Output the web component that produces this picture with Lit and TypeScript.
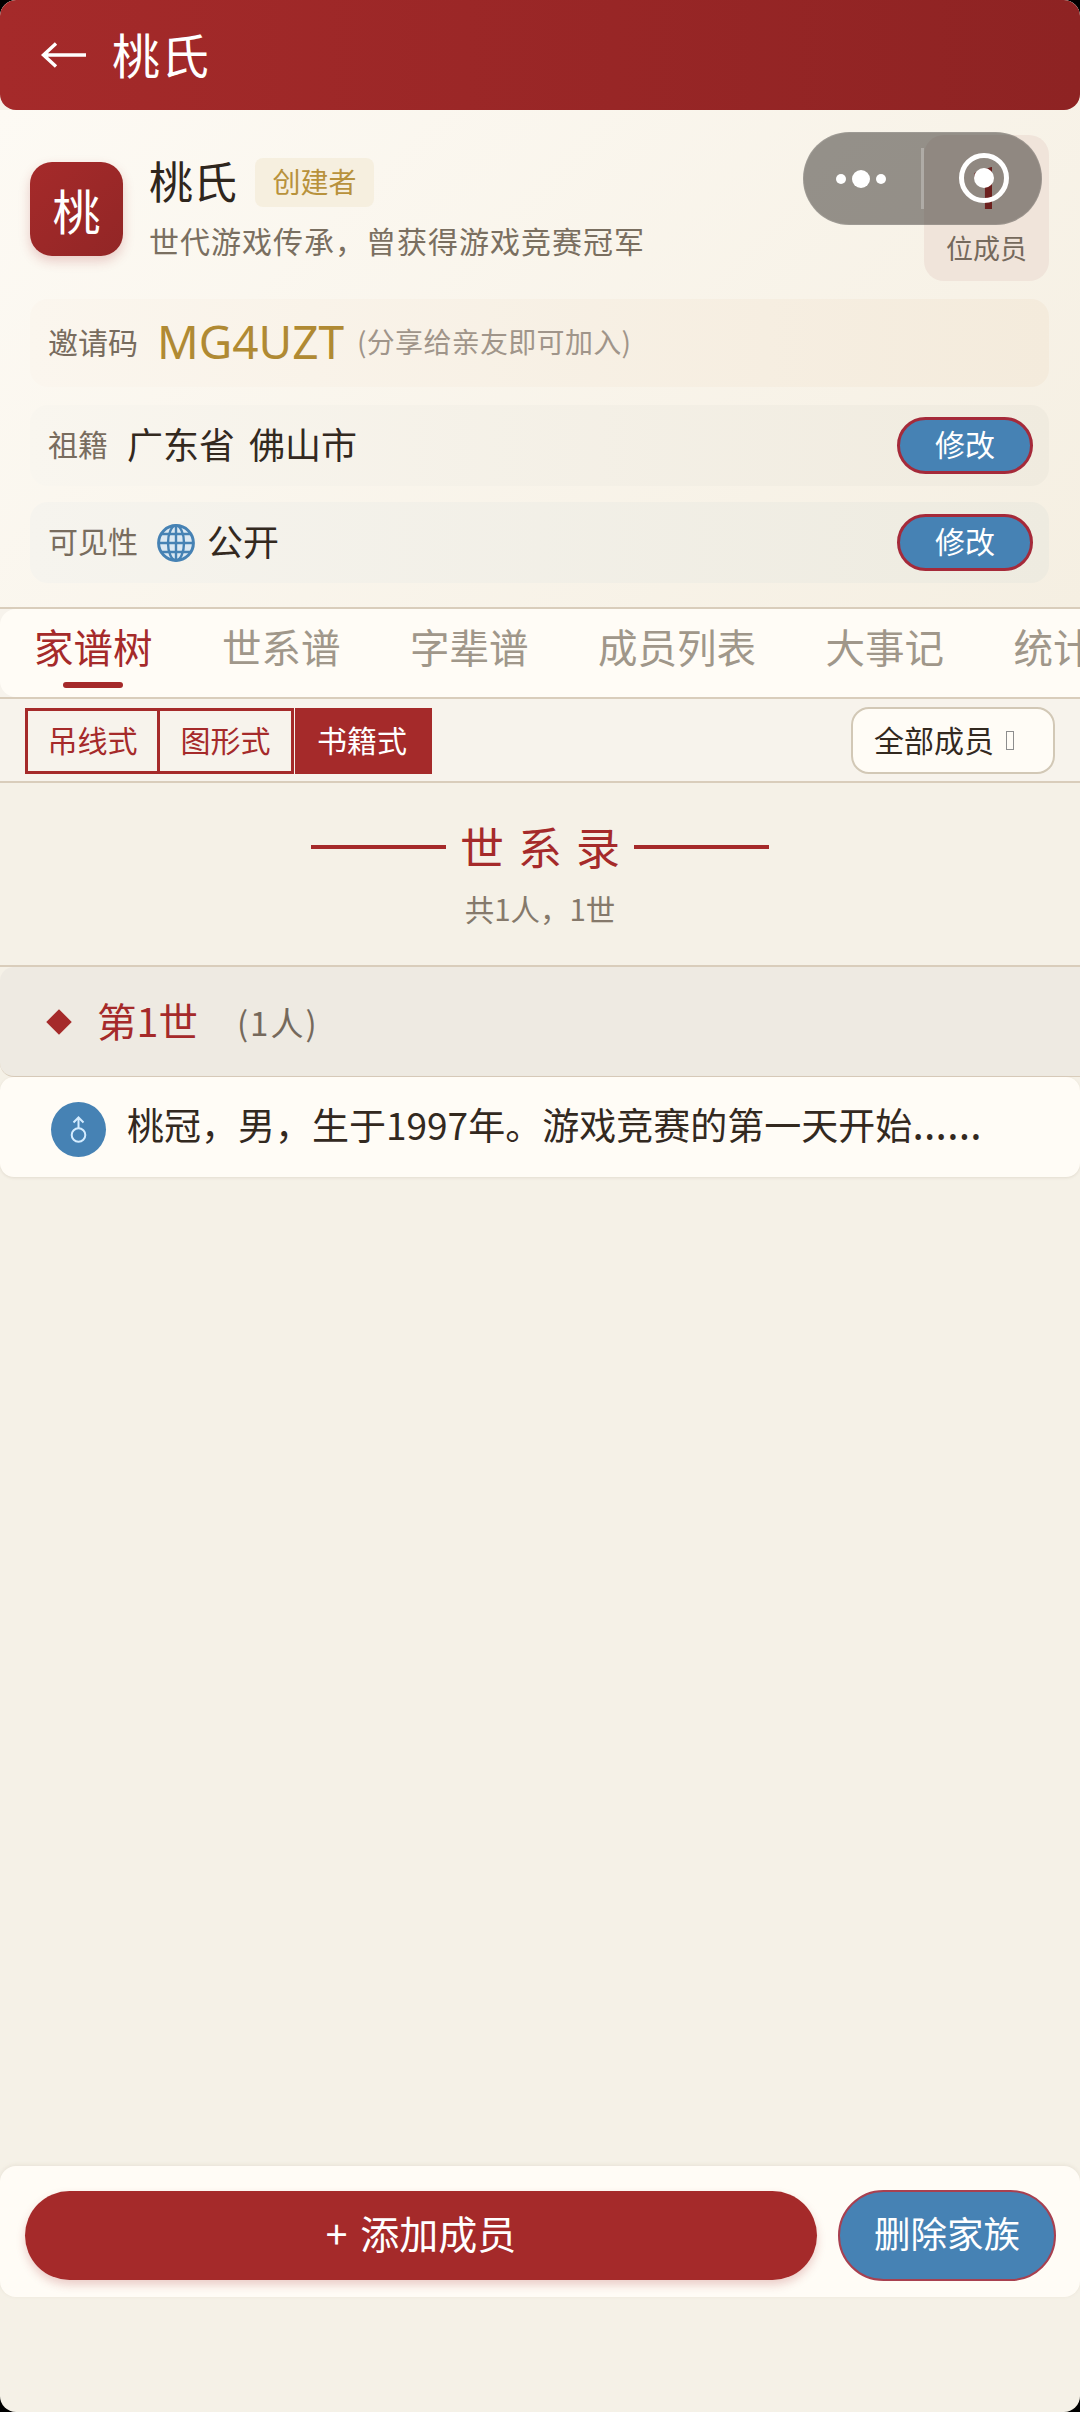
import { LitElement, html, css, svg } from "lit";
import { customElement } from "lit/decorators.js";

const globe = svg`<svg class="globe" viewBox="0 0 38 38" width="38" height="38" fill="none" stroke="#4682b4" stroke-width="2.4">
  <circle cx="19" cy="19" r="17.4" fill="#dbe8f2" stroke-width="3"/>
  <ellipse cx="19" cy="19" rx="8" ry="17.4"/>
  <line x1="19" y1="2" x2="19" y2="36"/>
  <line x1="2" y1="19" x2="36" y2="19"/>
  <path d="M4.5 10H33.5M4.5 28H33.5"/>
</svg>`;

const male = svg`<svg viewBox="0 0 55 55" width="55" height="55" fill="none" stroke="#d4ecff" stroke-width="2">
  <circle cx="27.5" cy="33" r="6.8"/>
  <path d="M27.5 26.2V16M22.5 20.5L27.5 15.5L32.5 20.5"/>
</svg>`;

const arrow = svg`<svg viewBox="0 0 48 32" width="48" height="32" fill="none" stroke="#fff" stroke-width="3.4">
  <path d="M46 16H3M16 4.5L3.5 16L16 27.5"/>
</svg>`;

@customElement("app-root")
export class AppRoot extends LitElement {
  static styles = css`
    :host { display: block; width: 1080px; height: 2412px; background: #000;
      font-family: "Noto Sans CJK SC", "Noto Sans", sans-serif; color: #33291f; }
    * { box-sizing: border-box; }
    .page { position: relative; height: 100%; display: flex; flex-direction: column; background: #f5f1e7;
      border-radius: 16px; overflow: hidden; padding-bottom: 115px; }
    .header { height: 110px; flex: none; display: flex; align-items: center; gap: 24px; padding-left: 40px;
      background: linear-gradient(90deg, #a52a2a, #8e2323); border-radius: 16px; color: #fff;
      font-size: 48px; line-height: 60px; letter-spacing: 1px; }
    .header span { margin-bottom: 5px; }
    .header svg { display: block; margin-top: 0; }
    .card { flex: none; height: 497px; padding: 25px 31px 0 30px; display: flex; flex-direction: column;
      background: linear-gradient(135deg, #fdfaf4, #f5efe2); }
    .head { display: flex; align-items: flex-start; height: 146px; }
    .logo { width: 93px; height: 94px; margin-top: 27px; border-radius: 22px; display: flex; align-items: center; justify-content: center;
      background: linear-gradient(135deg, #a52a2a, #922626); color: #fff; font-size: 48px; line-height: 60px;
      box-shadow: 0 5px 12px rgba(165,42,42,.22); flex: none; }
    .info { margin: 23px 0 0 26px; }
    .name-line { display: flex; align-items: center; gap: 18px; height: 49px; }
    .name { font-size: 44px; line-height: 50px; color: #2f261d; margin-bottom: 5px; }
    .badge { width: 119px; height: 49px; border-radius: 8px; background: #f6efdf; color: #b8923c;
      font-size: 28px; line-height: 47px; text-align: center; }
    .sub { margin-top: 13px; font-size: 30px; line-height: 40px; letter-spacing: 1px; color: #7a6f60; white-space: nowrap; }
    .members { margin-left: auto; width: 125px; height: 146px; padding-top: 14px; border-radius: 20px; background: #f0e4da;
      display: flex; flex-direction: column; align-items: center; flex: none; }
    .num { font-family: Roboto, sans-serif; font-size: 60px; line-height: 80px; height: 80px; color: #a81515; font-weight: 500; }
    .mlabel { margin-top: 1px; font-size: 27px; line-height: 36px; color: #75695c; }
    .row { border-radius: 18px; display: flex; align-items: center; padding: 0 16px 0 18px; }
    .invite { margin-top: 18px; height: 88px; background: linear-gradient(90deg, #fbf6ee, #f4ebdc); }
    .gray { height: 81px; margin-top: 18px; background: linear-gradient(90deg, #f9f6ef, #f0ebdf); }
    .gray + .gray { margin-top: 16px; background: linear-gradient(90deg, #f6f4ee, #eeebe0); }
    .label { font-size: 30px; line-height: 40px; color: #786c5e; margin-bottom: 5px; }
    .gray .label { margin-bottom: 6px; }
    .code { margin-left: 19px; font-size: 46px; line-height: 60px; color: #b08a33; font-family: "Noto Sans", sans-serif; margin-bottom: 5px; }
    .hint { margin-left: 13px; font-size: 28px; line-height: 40px; letter-spacing: .3px; color: #a0958a; margin-bottom: 5px; }
    .val { margin-left: 19px; font-size: 36px; line-height: 46px; color: #33291f; word-spacing: 6px; margin-bottom: 6px; }
    .globe { margin-left: 19px; margin-bottom: 0; flex: none; display: block; }
    .val.pub { margin-left: 12px; }
    .edit { margin-left: auto; width: 136px; height: 57px; border-radius: 29px; background: #4682b4; border: 3px solid #a52a3a;
      color: #fff; font-size: 30px; line-height: 46px; text-align: center; flex: none; }
    .tabs { flex: none; border-top: 2px solid #d9cdbb; border-bottom: 2px solid #d9cdbb; height: 92px; background: #f7f3ec; }
    .tabbar { height: 88px; padding: 12px 0 0 34px; display: flex; gap: 69.5px; overflow: hidden; background: #fffcf6; border-radius: 16px 0 0 16px; }
    .tab { flex: none; display: flex; flex-direction: column; align-items: center; font-size: 39.5px; line-height: 50px; color: #a0978a; }
    .tab.on { color: #a52a2a; }
    .tab i { display: block; width: 60px; height: 6px; margin-top: 11px; border-radius: 3px; background: #a52a2a; }
    .subbar { flex: none; height: 84px; padding: 9px 25px 0 25px; display: flex; align-items: flex-start; background: #f7f3ec; border-bottom: 2px solid #d9cdbb; }
    .seg { width: 135px; height: 66px; border: 3px solid #a52a2a; color: #a52a2a; font-size: 30px; line-height: 57px; text-align: center; }
    .seg + .seg { width: 134px; border-left: none; }
    .seg + .seg.on { width: 137px; margin-left: 1px; background: #a52a2a; color: #fff; }
    .select { margin-left: auto; margin-top: -1px; width: 204px; height: 67px; border: 2.5px solid #d2c8b6; border-radius: 18px; background: #fffcf6;
      display: flex; align-items: center; padding-left: 21px; font-size: 30px; color: #33291f; }
    .select span { margin-bottom: 3px; }
    .tofu { width: 8px; height: 19px; margin-left: 12px; border: 1px solid #8d8d8d; }
    .title { flex: none; height: 184px; display: flex; flex-direction: column; align-items: center; padding-top: 40px; border-bottom: 2px solid #d9cdbb; }
    .t-line { display: flex; align-items: center; gap: 14px; color: #a52a2a; font-size: 44px; line-height: 50px; letter-spacing: 14px; height: 50px; }
    .t-line span { margin-right: -14px; margin-bottom: 5px; }
    .t-line i { display: block; width: 135px; height: 4px; background: #a52a2a; margin-bottom: 3px; }
    .t-sub { margin-top: 15px; font-size: 29.5px; line-height: 40px; color: #85796b; }
    .sec { flex: none; height: 110px; display: flex; align-items: center; padding-left: 50px; background: #eeeae2; border-radius: 14px 0 0 14px; border-bottom: 1.5px solid #d9cdbb; }
    .diamond { width: 18px; height: 18px; background: #a52a2a; transform: rotate(45deg); flex: none; }
    .gen { margin-left: 29px; font-size: 39.5px; line-height: 50px; color: #a52a2a; margin-bottom: 3px; }
    .cnt { margin-left: 39px; font-size: 33px; line-height: 44px; color: #75695c; letter-spacing: 2px; }
    .item { flex: none; height: 100px; display: flex; align-items: center; padding: 0 0 0 51px; background: #fffcf6; border-radius: 14px; box-shadow: 0 1px 3px rgba(120,100,70,.14); }
    .avatar { width: 55px; height: 55px; margin-top: 4px; border-radius: 50%; background: #4682b4; flex: none; }
    .avatar svg { display: block; }
    .itxt { margin-left: 21px; margin-top: -7px; font-size: 37px; line-height: 50px; color: #33291f; white-space: nowrap; }
    .dots { font-family: "Noto Sans", sans-serif; font-size: 44px; line-height: 1; }
    .grow { flex: 1; }
    .bar { flex: none; height: 131px; display: flex; align-items: flex-start; padding: 25px 24px 0 25px; gap: 21px; background: #fffcf6; border-radius: 16px; box-shadow: 0 -1px 4px rgba(120,100,70,.1); }
    .add { width: 792px; height: 89px; border-radius: 45px; background: #a52a2a; color: #fff; font-size: 39px; line-height: 83px; text-align: center;
      box-shadow: 0 5px 10px rgba(165,42,42,.22); word-spacing: 4px; }
    .del { width: 218px; height: 91px; margin-top: -1px; border-radius: 46px; background: #4682b4; border: 2.5px solid #a84050; color: #fff; font-size: 36.5px; line-height: 82px; text-align: center; }
    .capsule { position: absolute; left: 803px; top: 132px; width: 239px; height: 93px; border-radius: 47px; background: rgba(47,43,40,.5); box-shadow: inset 0 0 0 1px rgba(255,255,255,.1); }
    .dot { position: absolute; top: 42px; width: 10px; height: 10px; border-radius: 50%; background: #fff; }
    .dot.big { top: 38px; width: 18px; height: 18px; }
    .divider { position: absolute; left: 118px; top: 16px; width: 3px; height: 61px; background: rgba(255,255,255,.25); }
    .ring { position: absolute; left: 156px; top: 21px; width: 50px; height: 50px; border-radius: 50%; border: 5px solid #fff; }
    .ring::after { content: ""; position: absolute; left: 10px; top: 10px; width: 20px; height: 20px; border-radius: 50%; background: #fff; }
  `;

  render() {
    const tabs = ["家谱树", "世系谱", "字辈谱", "成员列表", "大事记", "统计"];
    return html`<div class="page">
      <div class="header">${arrow}<span>桃氏</span></div>
      <div class="card">
        <div class="head">
          <div class="logo">桃</div>
          <div class="info">
            <div class="name-line"><span class="name">桃氏</span><span class="badge">创建者</span></div>
            <div class="sub">世代游戏传承，曾获得游戏竞赛冠军</div>
          </div>
          <div class="members"><div class="num">1</div><div class="mlabel">位成员</div></div>
        </div>
        <div class="row invite"><span class="label">邀请码</span><span class="code">MG4UZT</span><span class="hint">(分享给亲友即可加入)</span></div>
        <div class="row gray"><span class="label">祖籍</span><span class="val">广东省 佛山市</span><span class="edit">修改</span></div>
        <div class="row gray"><span class="label">可见性</span>${globe}<span class="val pub">公开</span><span class="edit">修改</span></div>
      </div>
      <div class="tabs"><div class="tabbar">
        ${tabs.map((t, i) => html`<div class="tab ${i === 0 ? "on" : ""}">${t}${i === 0 ? html`<i></i>` : ""}</div>`)}
      </div></div>
      <div class="subbar">
        <div class="seg">吊线式</div><div class="seg">图形式</div><div class="seg on">书籍式</div>
        <div class="select"><span>全部成员</span><i class="tofu"></i></div>
      </div>
      <div class="title">
        <div class="t-line"><i></i><span>世系录</span><i></i></div>
        <div class="t-sub">共1人，1世</div>
      </div>
      <div class="sec"><div class="diamond"></div><span class="gen">第1世</span><span class="cnt">(1人)</span></div>
      <div class="item"><div class="avatar">${male}</div><div class="itxt">桃冠，男，生于1997年。游戏竞赛的第一天开始<span class="dots">……</span></div></div>
      <div class="grow"></div>
      <div class="bar"><div class="add">+ 添加成员</div><div class="del">删除家族</div></div>
      <div class="capsule">
        <i class="dot" style="left:33px"></i><i class="dot big" style="left:49px"></i><i class="dot" style="left:73px"></i>
        <i class="divider"></i><i class="ring"></i>
      </div>
    </div>`;
  }
}
